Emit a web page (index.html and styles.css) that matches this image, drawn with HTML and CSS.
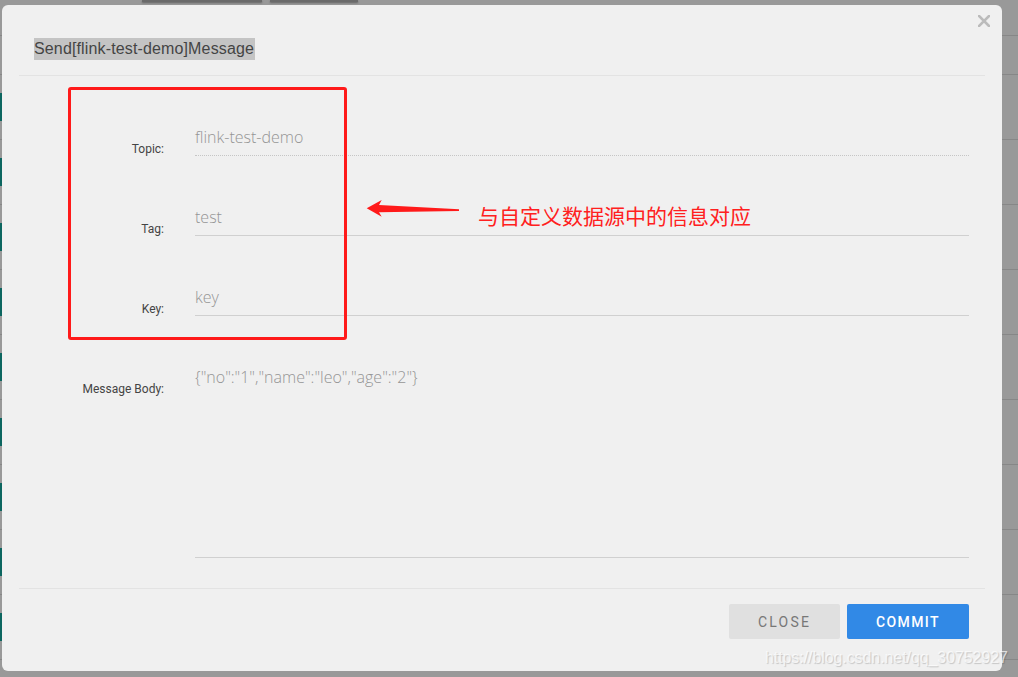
FILE: index.html
```html
<!DOCTYPE html>
<html lang="en">
<head>
<meta charset="utf-8">
<title>Send Message</title>
<link rel="stylesheet" href="styles.css">
</head>
<body>
<div class="page">
  <div class="toolbar"><span class="tb-btn tb-a"></span><span class="tb-btn tb-b"></span></div>
  <div class="table">
    <div class="thead"></div>
    <div class="trow"><span class="mark"></span></div>
    <div class="trow"><span class="mark"></span></div>
    <div class="trow"><span class="mark"></span></div>
    <div class="trow"><span class="mark"></span></div>
    <div class="trow"><span class="mark"></span></div>
    <div class="trow"><span class="mark"></span></div>
    <div class="trow"><span class="mark"></span></div>
    <div class="trow"><span class="mark"></span></div>
    <div class="trow"><span class="mark"></span></div>
  </div>
</div>

<div class="modal">
  <button class="close-x" aria-label="close">
    <svg width="12" height="12" viewBox="0 0 12 12"><path d="M1 1 L11 11 M11 1 L1 11" stroke="#bbbbbb" stroke-width="2.6" stroke-linecap="square" fill="none"/></svg>
  </button>
  <div class="modal-header"><span class="title">Send[flink-test-demo]Message</span></div>
  <div class="modal-body">
    <div class="form-row">
      <label class="lbl">Topic:</label>
      <div class="field disabled">flink-test-demo</div>
    </div>
    <div class="form-row">
      <label class="lbl">Tag:</label>
      <div class="field">test</div>
    </div>
    <div class="form-row">
      <label class="lbl">Key:</label>
      <div class="field">key</div>
    </div>
    <div class="form-row last">
      <label class="lbl">Message Body:</label>
      <div class="field area">{"no":"1","name":"leo","age":"2"}</div>
    </div>
  </div>
  <div class="modal-footer">
    <button class="btn btn-close">CLOSE</button>
    <button class="btn btn-commit">COMMIT</button>
  </div>
</div>

<div class="annot-box"></div>
<svg class="annot-arrow" width="110" height="30" viewBox="0 0 110 30">
  <polygon points="6.7,13.3 21.7,5 19,10 99,14.3 99,16 19,17.3 21.7,21.7" fill="#ff1a1a"/>
</svg>
<div class="annot-text">与自定义数据源中的信息对应</div>
<div class="watermark">https://blog.csdn.net/qq_30752927</div>
</body>
</html>
```

FILE: styles.css
```css
html, body {
  margin: 0;
  padding: 0;
}
body {
  width: 1018px;
  height: 677px;
  overflow: hidden;
  background: #999999;
  position: relative;
  font-family: Roboto, "Liberation Sans", Arial, sans-serif;
}

/* background page (dimmed) */
.page {
  width: 1018px;
}
.toolbar {
  height: 35px;
  border-bottom: 1px solid #878787;
  display: flex;
  gap: 8px;
  padding-left: 142px;
  align-items: flex-start;
}
.tb-btn {
  display: block;
  height: 2px;
  background: #6b6b6b;
  box-shadow: 0 1px 2px rgba(0,0,0,0.35);
}
.tb-a { width: 120px; }
.tb-b { width: 88px; }
.thead {
  height: 38px;
  border-bottom: 1px solid #878787;
}
.trow {
  height: 64px;
  border-bottom: 1px solid #878787;
  display: flex;
  align-items: flex-start;
}
.mark {
  display: block;
  width: 2px;
  height: 28px;
  margin-top: 18px;
  background: #0c6660;
}

/* modal */
.modal {
  position: absolute;
  left: 2px;
  top: 5px;
  width: 1000px;
  height: 666px;
  box-sizing: border-box;
  padding: 0 17px;
  background: #f0f0f0;
  border-radius: 6px;
  display: flex;
  flex-direction: column;
}
.close-x {
  position: absolute;
  top: 10px;
  right: 12px;
  width: 12px;
  height: 12px;
  padding: 0;
  border: 0;
  background: transparent;
  display: flex;
}
.modal-header {
  height: 71px;
  box-sizing: border-box;
  padding: 33px 0 15px 15px;
  border-bottom: 1px solid #e3e3e3;
}
.title {
  display: inline-block;
  font-family: "Liberation Sans", Arial, sans-serif;
  font-size: 16px;
  line-height: 22px;
  letter-spacing: 0.14px;
  color: #444444;
  background: #c4c4c4;
  padding: 0 1px 0 0;
}
.modal-body {
  padding: 43px 16px 30px 0;
  display: flex;
  flex-direction: column;
  gap: 43px;
}
.form-row {
  display: flex;
  gap: 31px;
  align-items: flex-start;
}
.lbl {
  width: 145px;
  height: 37px;
  box-sizing: border-box;
  flex: none;
  text-align: right;
  font-size: 12px;
  line-height: 13px;
  padding-top: 24px;
  color: #444444;
}
.field {
  flex: 1;
  height: 36px;
  line-height: 36px;
  border-bottom: 1px solid #d0d0d0;
  font-family: "Open Sans", Roboto, sans-serif;
  font-size: 16px;
  font-weight: 300;
  color: #959595;
}
.field.disabled {
  border-bottom: 1px dotted #c6c6c6;
}
.field.area {
  box-sizing: border-box;
  height: 199px;
  padding-top: 7px;
  line-height: 22px;
}
.modal-footer {
  border-top: 1px solid #e3e3e3;
  padding: 15px 16px 0 0;
  display: flex;
  justify-content: flex-end;
  gap: 7px;
}
.btn {
  height: 35px;
  border: 0;
  border-radius: 2px;
  font-family: Roboto, "Liberation Sans", Arial, sans-serif;
  font-size: 14px;
  padding: 0;
  cursor: pointer;
}
.btn-close {
  width: 111px;
  background: #e0e0e0;
  color: #777777;
  letter-spacing: 2.2px;
}
.btn-commit {
  width: 122px;
  background: #3189e6;
  color: #ffffff;
  font-weight: 500;
  letter-spacing: 1.4px;
}

/* annotations (overlay) */
.annot-box {
  position: absolute;
  left: 68px;
  top: 87px;
  width: 273px;
  height: 247px;
  border: 3px solid #ff1a1a;
  border-radius: 3px;
}
.annot-arrow {
  position: absolute;
  left: 360px;
  top: 195px;
}
.annot-text {
  position: absolute;
  left: 478px;
  top: 205px;
  font-family: "Noto Sans CJK SC", sans-serif;
  font-size: 21px;
  line-height: 21px;
  color: #ff2020;
  white-space: nowrap;
}
.watermark {
  position: absolute;
  left: 765px;
  top: 648px;
  font-family: "Liberation Sans", Arial, sans-serif;
  font-size: 16px;
  line-height: 19px;
  letter-spacing: -0.08px;
  color: rgba(255,255,255,0.7);
  text-shadow: 1px 1px 1px rgba(0,0,0,0.18);
  white-space: nowrap;
}
```
